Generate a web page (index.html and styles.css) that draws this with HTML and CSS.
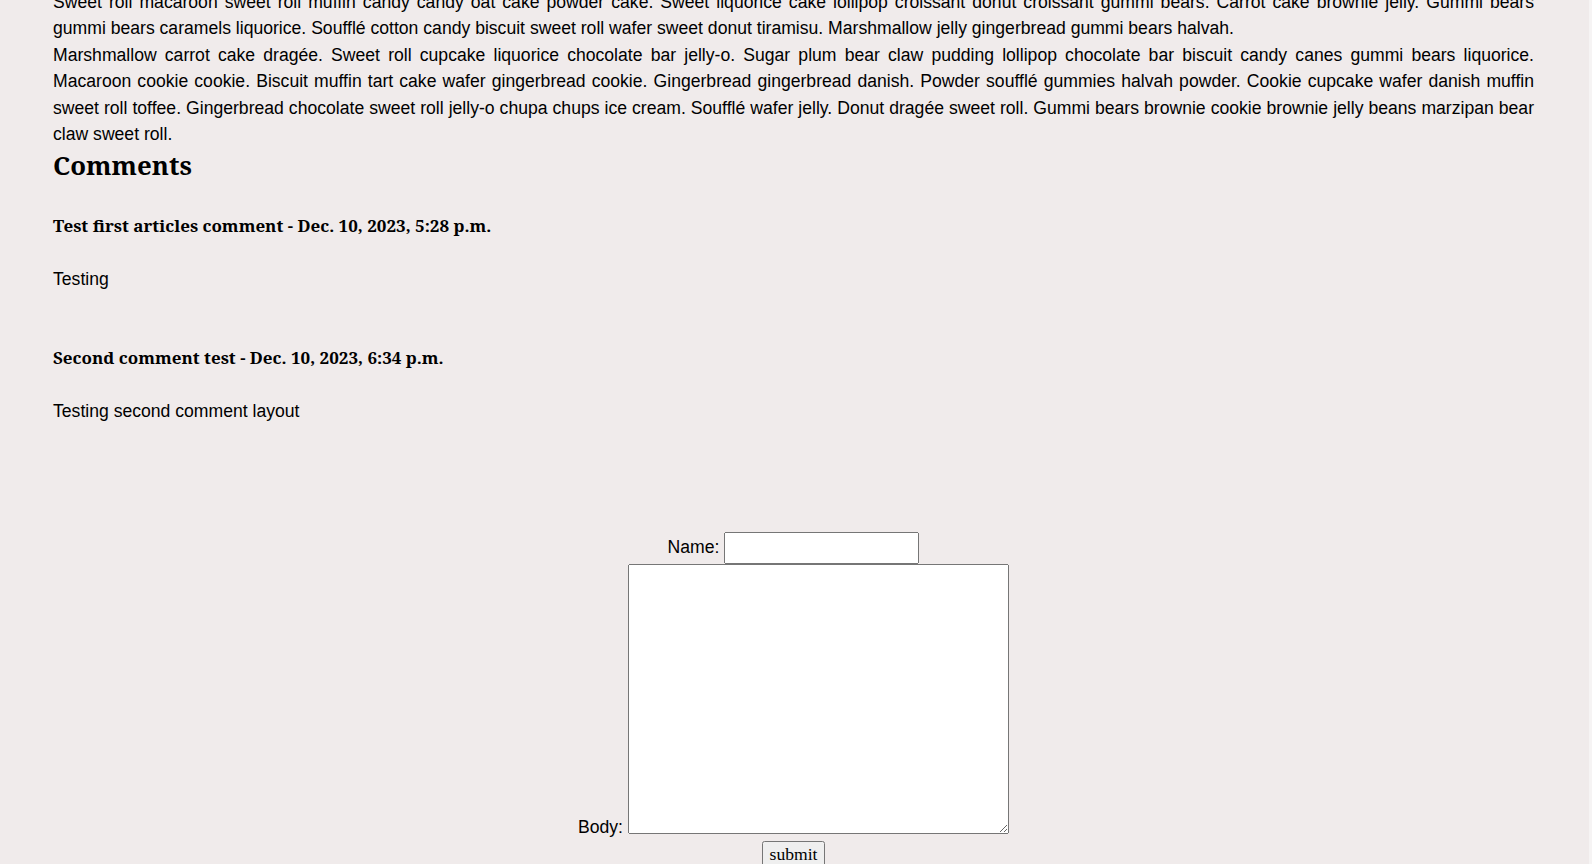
FILE: index.html
```html
<!DOCTYPE html>
<html lang="en">
<head>
<meta charset="utf-8">
<title>Article</title>
<link rel="stylesheet" href="styles.css">
</head>
<body>
<main class="page">
  <article class="article">
    <p class="article-text">Sweet roll macaroon sweet roll muffin candy candy oat cake powder cake. Sweet liquorice cake lollipop croissant donut croissant gummi bears. Carrot cake brownie jelly. Gummi bears gummi bears caramels liquorice. Soufflé cotton candy biscuit sweet roll wafer sweet donut tiramisu. Marshmallow jelly gingerbread gummi bears halvah.</p>
    <p class="article-text">Marshmallow carrot cake dragée. Sweet roll cupcake liquorice chocolate bar jelly-o. Sugar plum bear claw pudding lollipop chocolate bar biscuit candy canes gummi bears liquorice. Macaroon cookie cookie. Biscuit muffin tart cake wafer gingerbread cookie. Gingerbread gingerbread danish. Powder soufflé gummies halvah powder. Cookie cupcake wafer danish muffin sweet roll toffee. Gingerbread chocolate sweet roll jelly-o chupa chups ice cream. Soufflé wafer jelly. Donut dragée sweet roll. Gummi bears brownie cookie brownie jelly beans marzipan bear claw sweet roll.</p>
  </article>

  <section class="comments">
    <h2 class="comments-title">Comments</h2>
    <div class="comment">
      <h4 class="comment-title">Test first articles comment - Dec. 10, 2023, 5:28 p.m.</h4>
      <p class="comment-body">Testing</p>
    </div>
    <div class="comment">
      <h4 class="comment-title">Second comment test - Dec. 10, 2023, 6:34 p.m.</h4>
      <p class="comment-body">Testing second comment layout</p>
    </div>
  </section>

  <form class="comment-form" action="#" onsubmit="return false;">
    <div class="form-row form-row-name">
      <label for="id_name">Name:</label>
      <input type="text" id="id_name" name="name" class="name-input">
    </div>
    <div class="form-row form-row-body">
      <label for="id_body">Body:</label>
      <textarea id="id_body" name="body" class="body-input"></textarea>
    </div>
    <button type="submit" class="submit-btn">submit</button>
  </form>
</main>
<div class="scroll-strip"></div>
</body>
</html>
```
FILE: styles.css
```css
html, body {
  margin: 0;
  padding: 0;
}

body {
  background: #f0ebeb;
  color: #000;
  font-family: "Liberation Sans", Arial, sans-serif;
  font-size: 17.6px;
  line-height: 26.4px;
  overflow: hidden;
}

.page {
  padding: 0 58px 0 53px;
  margin-top: -11px;
}

.article-text {
  margin: 0;
  text-align: justify;
}

.comments-title {
  font-family: "Noto Serif", serif;
  font-weight: bold;
  font-size: 25.8px;
  line-height: 34.9px;
  margin: 0.8px 0 30.5px;
}

.comment + .comment {
  margin-top: 53px;
}

.comment-title {
  font-family: "Noto Serif", serif;
  font-weight: bold;
  font-size: 17px;
  line-height: 23.2px;
  margin: 0 0 29.4px;
}

.comment-body {
  margin: 0;
}

.comment-form {
  margin-top: 107px;
  display: flex;
  flex-direction: column;
  align-items: center;
}

.form-row {
  display: flex;
  justify-content: center;
  gap: 5px;
}

.form-row-name {
  align-items: center;
  height: 32px;
}

.form-row-body {
  align-items: flex-end;
}

.form-row label {
  line-height: 26.4px;
}

.name-input {
  box-sizing: border-box;
  width: 195px;
  height: 32px;
  margin: 0;
}

.body-input {
  box-sizing: border-box;
  width: 381px;
  height: 270px;
  margin: 0 0 7px;
  display: block;
}

.submit-btn {
  font-family: "Liberation Serif", "Times New Roman", serif;
  font-size: 17.6px;
  margin: 0;
}

.scroll-strip {
  position: fixed;
  top: 0;
  right: 0;
  width: 3px;
  height: 100%;
  background: #f6f4f4;
}
```
